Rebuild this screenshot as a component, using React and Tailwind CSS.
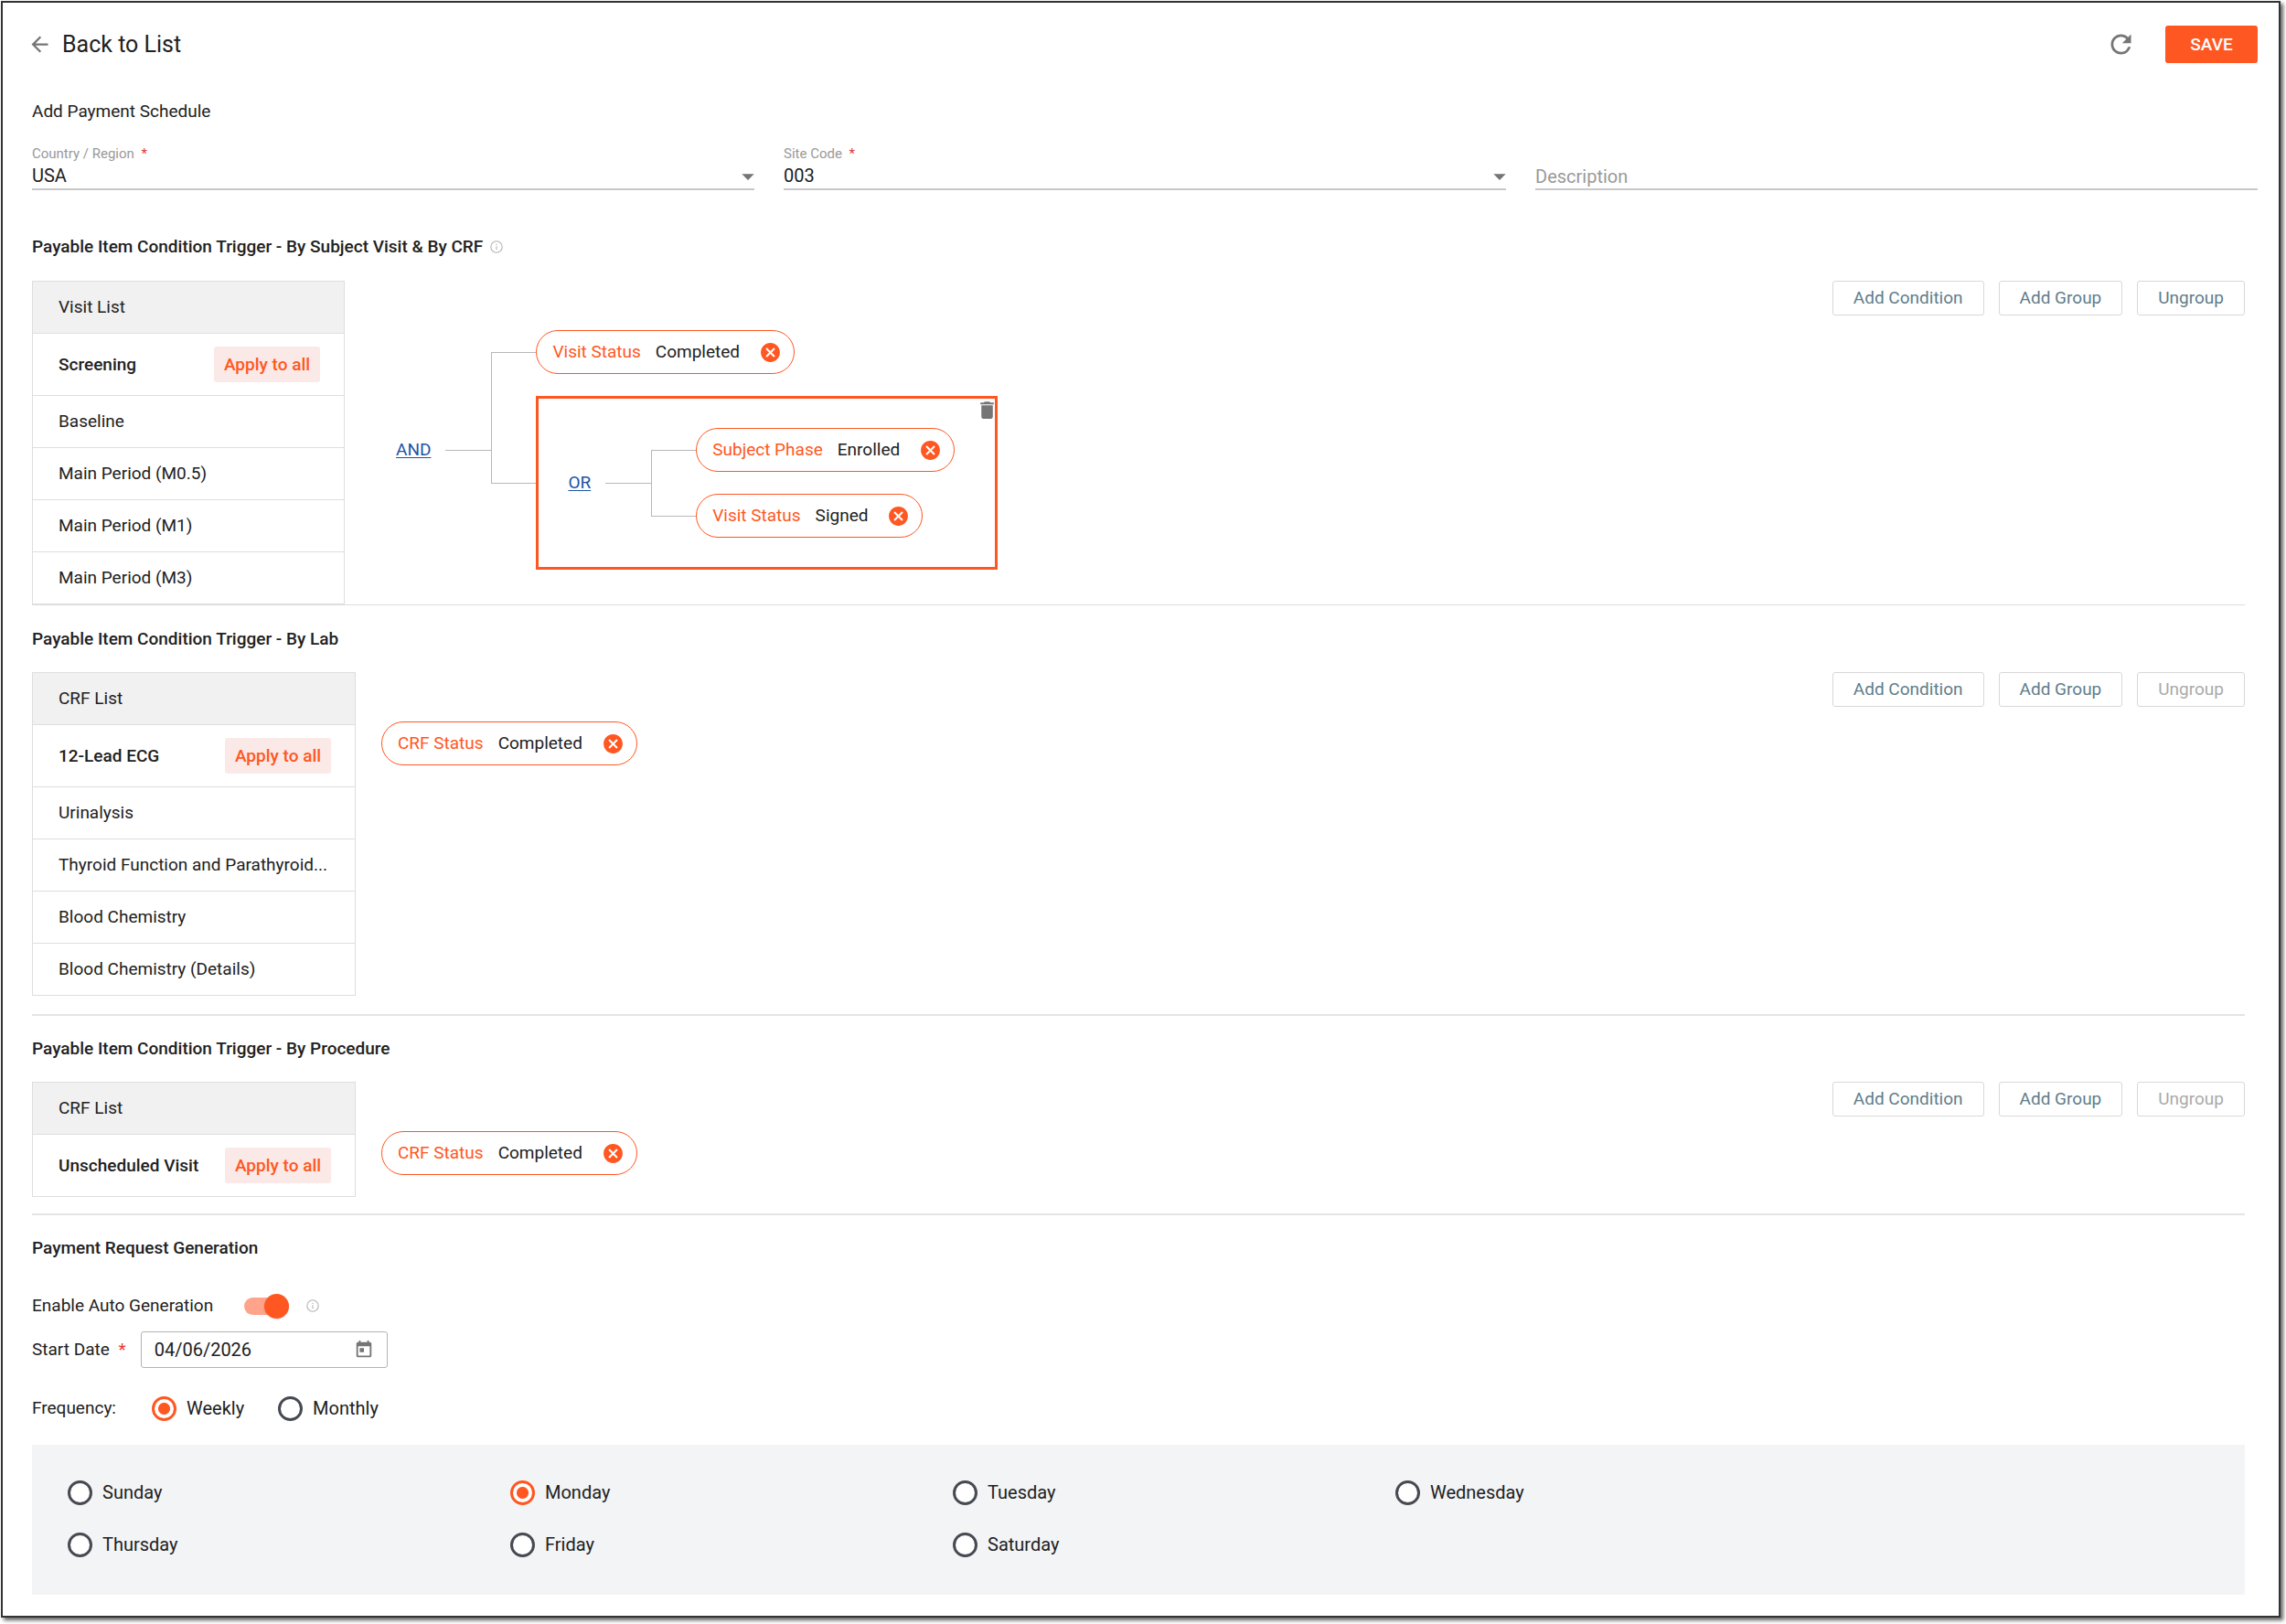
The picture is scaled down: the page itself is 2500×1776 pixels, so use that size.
import { useState } from 'react';
import { MdArrowBack, MdArrowDropDown, MdCancel, MdDelete, MdRefresh, MdToday } from 'react-icons/md';

const VISITS = ['Screening', 'Baseline', 'Main Period (M0.5)', 'Main Period (M1)', 'Main Period (M3)'];
const LAB_CRFS = ['12-Lead ECG', 'Urinalysis', 'Thyroid Function and Parathyroid...', 'Blood Chemistry', 'Blood Chemistry (Details)'];
const PROCEDURE_CRFS = ['Unscheduled Visit'];
const DAYS = ['Sunday', 'Monday', 'Tuesday', 'Wednesday', 'Thursday', 'Friday', 'Saturday'];

function InfoIcon() {
  return (
    <svg viewBox="0 0 14 14" className="size-[14px] text-[#b4b4b4]" fill="none" stroke="currentColor">
      <circle cx="7" cy="7" r="6.2" strokeWidth="1.1" />
      <path d="M7 6.2v4M7 3.8v1.2" strokeWidth="1.1" />
    </svg>
  );
}

function SelectField({ id, label, value }) {
  return (
    <div className="flex-1">
      <label htmlFor={id} className="block text-[15px] leading-5 text-[#999]">
        {label} <span className="ml-1 text-[#e53935]">*</span>
      </label>
      <div className="relative">
        <select id={id} defaultValue={value} className="block h-[30px] w-full appearance-none border-b-2 border-[#c8c8c8] bg-transparent text-[20px] leading-7 outline-none">
          <option>{value}</option>
        </select>
        <MdArrowDropDown className="pointer-events-none absolute -right-[9px] -top-px size-[32px] text-[#757575]" />
      </div>
    </div>
  );
}

function SectionTitle({ children }) {
  return <h2 className="flex items-center gap-2 text-[19px] font-medium leading-7">{children}</h2>;
}

function ListTable({ title, items, width }) {
  return (
    <table className={`${width} shrink-0 border-collapse border border-[#dedede]`}>
      <thead>
        <tr className="h-[57px] border-b border-[#dedede] bg-[#f1f1f1]">
          <th scope="col" className="pl-7 text-left font-normal">{title}</th>
        </tr>
      </thead>
      <tbody>
        {items.map((item, index) =>
          index === 0 ? (
            <tr key={item} className="h-[68px] border-b border-[#dedede]">
              <td className="pl-7 pr-[26px]">
                <div className="flex items-center justify-between whitespace-nowrap font-medium">
                  {item}
                  <button type="button" className="h-[39px] w-[116px] rounded-[3px] bg-[#fbe9e7] text-[#ff5722]">
                    Apply to all
                  </button>
                </div>
              </td>
            </tr>
          ) : (
            <tr key={item} className="h-[57px] border-b border-[#dedede]">
              <td className="whitespace-nowrap pl-7">{item}</td>
            </tr>
          )
        )}
      </tbody>
    </table>
  );
}

function Pill({ name, value }) {
  return (
    <div className="flex h-12 items-center rounded-full border border-[#ff5722] pl-[17px] pr-[13px]">
      <span className="text-[#ff5722]">{name}</span>
      <span className="ml-4">{value}</span>
      <button type="button" aria-label={`Remove ${name} ${value}`} className="ml-[21px]">
        <MdCancel className="size-[25px] text-[#ff5722]" />
      </button>
    </div>
  );
}

// One child of a logic group, with its part of the connector line
function Branch({ first, last, children }) {
  return (
    <div className="flex">
      <div className="flex w-[49px] flex-col">
        <div className={`flex-1 border-b border-[#b8b8b8] ${first ? '' : 'border-l'}`} />
        <div className={`flex-1 border-[#b8b8b8] ${last ? '' : 'border-l'}`} />
      </div>
      <div className="flex py-3">{children}</div>
    </div>
  );
}

function LogicGroup({ operator, children }) {
  return (
    <div className="flex items-center">
      <button type="button" className="text-[#1c54a6] underline underline-offset-2">{operator}</button>
      <div className="ml-4 h-px w-[50px] bg-[#b8b8b8]" />
      <div>
        {children.map((child, index) => (
          <Branch key={index} first={index === 0} last={index === children.length - 1}>
            {child}
          </Branch>
        ))}
      </div>
    </div>
  );
}

function Actions({ canUngroup }) {
  const base = 'h-[38px] rounded-[3px] border border-[#d8d8d8] px-[22px] text-[#607d8b]';
  return (
    <div className="ml-auto flex gap-4">
      <button type="button" className={base}>Add Condition</button>
      <button type="button" className={base}>Add Group</button>
      <button type="button" disabled={!canUngroup} className={`${base} disabled:text-[#aaa]`}>Ungroup</button>
    </div>
  );
}

function Radio({ name, label, checked, onChange }) {
  return (
    <label className="flex h-10 items-center gap-[11px] text-[20px]">
      <input
        type="radio"
        name={name}
        checked={checked}
        onChange={() => onChange(label)}
        className="size-[27px] appearance-none rounded-full border-[3px] border-[#474a52] bg-white checked:border-[#ff5722] checked:bg-[radial-gradient(circle,#ff5722_6px,white_7px)]"
      />
      {label}
    </label>
  );
}

export default function App() {
  const [frequency, setFrequency] = useState('Weekly');
  const [day, setDay] = useState('Monday');
  const [autoGenerate, setAutoGenerate] = useState(true);

  return (
    <div className="flex min-h-screen bg-white pb-[7px] pl-px pr-[6px] pt-px font-['Roboto',sans-serif] text-[19px] leading-7 text-[#212121]">
      <main className="flex-1 border-2 border-[#333] pb-[21px] pl-8 pr-[23px] pt-[25px] shadow-[3px_3px_4px_rgba(0,0,0,0.6)]">
        <header className="flex h-[41px] items-center">
          <a href="#" className="flex items-center gap-[11px] text-[25px]">
            <MdArrowBack className="-ml-[5px] size-[27px] text-[#757575]" />
            Back to List
          </a>
          <button type="button" aria-label="Refresh" className="ml-auto">
            <MdRefresh className="size-[33px] text-[#757575]" />
          </button>
          <button type="button" className="ml-8 h-[41px] w-[101px] rounded-[3px] bg-[#ff5722] font-medium text-white">
            SAVE
          </button>
        </header>

        <h1 className="mt-[39px]">Add Payment Schedule</h1>
        <div className="mt-[22px] flex items-end gap-8">
          <SelectField id="country" label="Country / Region" value="USA" />
          <SelectField id="site" label="Site Code" value="003" />
          <div className="flex-1">
            <input aria-label="Description" placeholder="Description" className="block h-[30px] w-full border-b-2 border-[#c8c8c8] pt-[2px] text-[20px] outline-none placeholder:text-[#999]" />
          </div>
        </div>

        <div className="pr-[14px]">
          <section className="mt-12 border-b border-[#dedede]">
            <SectionTitle>
              Payable Item Condition Trigger - By Subject Visit &amp; By CRF <InfoIcon />
            </SectionTitle>
            <div className="mt-[23px] flex items-start">
              <ListTable title="Visit List" items={VISITS} width="w-[342px]" />
              <div className="ml-14 mt-[42px]">
                <LogicGroup operator="AND">
                  <Pill name="Visit Status" value="Completed" />
                  <div className="relative border-[3px] border-[#ff5722] py-[20px] pl-8 pr-11">
                    <LogicGroup operator="OR">
                      <Pill name="Subject Phase" value="Enrolled" />
                      <Pill name="Visit Status" value="Signed" />
                    </LogicGroup>
                    <button type="button" aria-label="Delete group" className="absolute -right-1 top-0">
                      <MdDelete className="size-[25px] text-[#757575]" />
                    </button>
                  </div>
                </LogicGroup>
              </div>
              <Actions canUngroup />
            </div>
          </section>

          <section className="mt-[23px] border-b-2 border-[#e4e4e4] pb-5">
            <SectionTitle>Payable Item Condition Trigger - By Lab</SectionTitle>
            <div className="mt-[22px] flex items-start">
              <ListTable title="CRF List" items={LAB_CRFS} width="w-[354px]" />
              <div className="ml-7 mt-[54px]">
                <Pill name="CRF Status" value="Completed" />
              </div>
              <Actions />
            </div>
          </section>

          <section className="mt-[22px] border-b-2 border-[#e4e4e4] pb-[18px]">
            <SectionTitle>Payable Item Condition Trigger - By Procedure</SectionTitle>
            <div className="mt-[22px] flex items-start">
              <ListTable title="CRF List" items={PROCEDURE_CRFS} width="w-[354px]" />
              <div className="ml-7 mt-[54px]">
                <Pill name="CRF Status" value="Completed" />
              </div>
              <Actions />
            </div>
          </section>

          <section className="mt-[22px]">
            <SectionTitle>Payment Request Generation</SectionTitle>
            <div className="mt-[29px] flex h-10 items-center">
              <label htmlFor="auto-generate">Enable Auto Generation</label>
              <div className="relative ml-[34px] mr-[19px] flex items-center">
                <input
                  id="auto-generate"
                  type="checkbox"
                  role="switch"
                  checked={autoGenerate}
                  onChange={(e) => setAutoGenerate(e.target.checked)}
                  className="peer h-[19px] w-[49px] appearance-none rounded-full bg-gray-300 checked:bg-[#ffa38a]"
                />
                <span className="pointer-events-none absolute left-0 size-[27px] rounded-full bg-gray-50 shadow-sm peer-checked:left-[22px] peer-checked:bg-[#ff5722]" />
              </div>
              <InfoIcon />
            </div>
            <div className="mt-2 flex items-center">
              <label htmlFor="start-date">
                Start Date <span className="ml-[5px] text-[#e53935]">*</span>
              </label>
              <div className="ml-4 flex h-10 w-[270px] items-center rounded-[3px] border border-[#b4b4b4] px-[14px]">
                <input id="start-date" defaultValue="04/06/2026" className="min-w-0 flex-1 text-[20px] outline-none" />
                <button type="button" aria-label="Open calendar">
                  <MdToday className="size-[22px] text-[#757575]" />
                </button>
              </div>
            </div>
            <div role="radiogroup" aria-label="Frequency" className="mt-6 flex items-center">
              Frequency:
              <div className="ml-[39px] flex gap-[37px]">
                <Radio name="frequency" label="Weekly" checked={frequency === 'Weekly'} onChange={setFrequency} />
                <Radio name="frequency" label="Monthly" checked={frequency === 'Monthly'} onChange={setFrequency} />
              </div>
            </div>
            <div className="mt-5 bg-[#f3f4f6] pb-[35px] pt-8">
              <div role="radiogroup" aria-label="Day of week" className="ml-[39px] grid w-4/5 grid-cols-4 gap-y-[17px]">
                {DAYS.map((name) => (
                  <Radio key={name} name="day" label={name} checked={day === name} onChange={setDay} />
                ))}
              </div>
            </div>
          </section>
        </div>
      </main>
    </div>
  );
}
